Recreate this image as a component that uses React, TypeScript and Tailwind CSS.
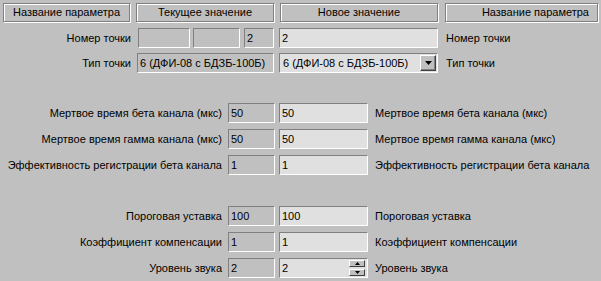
import React from "react";

const sunken =
  "border border-t-[#808080] border-l-[#808080] border-b-white border-r-white";

function Field({
  w,
  value,
  light,
  className = "",
}: {
  w: string;
  value?: string;
  light?: boolean;
  className?: string;
}) {
  return (
    <div
      className={`${w} h-[20px] ${sunken} ${
        light ? "bg-[#e0e0e0]" : "bg-[#c0c0c0]"
      } flex items-center pl-[2px] leading-none ${className}`}
    >
      {value}
    </div>
  );
}

function HeaderBtn({
  w,
  children,
  className = "",
}: {
  w: string;
  children: React.ReactNode;
  className?: string;
}) {
  return (
    <div
      className={`${w} h-[19px] border border-[#808080] shadow-[inset_1px_1px_0_#fff,1px_1px_0_#fff] flex items-center leading-none ${className}`}
    >
      {children}
    </div>
  );
}

function Row({
  labelW,
  label,
  current,
  newValue,
  right,
  spin,
}: {
  labelW: string;
  label: string;
  current: string;
  newValue: string;
  right: string;
  spin?: boolean;
}) {
  return (
    <div className="flex items-center h-[20px]">
      <div className={`${labelW} text-right whitespace-nowrap`}>{label}</div>
      <Field w="w-[47px]" value={current} className="ml-[6px]" />
      <div
        className={`w-[89px] h-[20px] ml-[4px] ${sunken} bg-[#e0e0e0] flex items-center pl-[2px] relative`}
      >
        {newValue}
        {spin && (
          <div className="absolute right-[2px] top-[1px] flex flex-col gap-[2px]">
            <div className="w-[16px] h-[7px] bg-[#c0c0c0] border border-t-white border-l-white border-b-[#404040] border-r-[#404040] flex items-center justify-center">
              <svg width="5" height="3" viewBox="0 0 5 3">
                <polygon points="2.5,0 5,3 0,3" fill="#000" />
              </svg>
            </div>
            <div className="w-[16px] h-[7px] bg-[#c0c0c0] border border-t-white border-l-white border-b-[#404040] border-r-[#404040] flex items-center justify-center">
              <svg width="5" height="3" viewBox="0 0 5 3">
                <polygon points="0,0 5,0 2.5,3" fill="#000" />
              </svg>
            </div>
          </div>
        )}
      </div>
      <div className="ml-[7px] whitespace-nowrap">{right}</div>
    </div>
  );
}

export default function App() {
  return (
    <div
      className="w-[601px] h-[281px] bg-[#c0c0c0] text-black text-[11px] overflow-hidden"
      style={{ fontFamily: '"Liberation Sans", Arial, sans-serif' }}
    >
      <div className="flex pt-[3px] pl-[3px]">
        <HeaderBtn w="w-[127px]" className="justify-center">
          Название параметра
        </HeaderBtn>
        <HeaderBtn w="w-[138px] ml-[6px]" className="justify-center">
          Текущее значение
        </HeaderBtn>
        <HeaderBtn w="w-[158px] ml-[6px]" className="justify-center">
          Новое значение
        </HeaderBtn>
        <HeaderBtn w="w-[153px] ml-[7px]" className="justify-end pr-[8px]">
          Название параметра
        </HeaderBtn>
      </div>

      <div className="flex items-center h-[20px] mt-[6px]">
        <div className="w-[131px] text-right whitespace-nowrap">Номер точки</div>
        <Field w="w-[52px]" className="ml-[7px]" />
        <Field w="w-[47px]" className="ml-[3px]" />
        <Field w="w-[30px]" value="2" className="ml-[4px]" />
        <Field w="w-[159px]" value="2" light className="ml-[5px]" />
        <div className="ml-[8px] whitespace-nowrap">Номер точки</div>
      </div>

      <div className="flex items-center h-[20px] mt-[5px]">
        <div className="w-[131px] text-right whitespace-nowrap">Тип точки</div>
        <Field
          w="w-[137px]"
          value="6 (ДФИ-08 с БДЗБ-100Б)"
          className="ml-[6px] whitespace-nowrap"
        />
        <div
          className={`w-[159px] h-[20px] ml-[5px] ${sunken} bg-[#e0e0e0] flex items-center pl-[3px] relative whitespace-nowrap`}
        >
          6 (ДФИ-08 с БДЗБ-100Б)
          <div className="absolute right-[1px] top-[1px] w-[16px] h-[16px] bg-[#c0c0c0] border border-t-white border-l-white border-b-[#404040] border-r-[#404040] shadow-[inset_-1px_-1px_0_#808080] flex items-center justify-center">
            <svg width="7" height="4" viewBox="0 0 7 4">
              <polygon points="0,0 7,0 3.5,4" fill="#000" />
            </svg>
          </div>
        </div>
        <div className="ml-[8px] whitespace-nowrap">Тип точки</div>
      </div>

      <div className="flex flex-col gap-[6px] mt-[30px]">
        <Row
          labelW="w-[222px]"
          label="Мертвое время бета канала (мкс)"
          current="50"
          newValue="50"
          right="Мертвое время бета канала (мкс)"
        />
        <Row
          labelW="w-[222px]"
          label="Мертвое время гамма канала (мкс)"
          current="50"
          newValue="50"
          right="Мертвое время гамма канала (мкс)"
        />
        <Row
          labelW="w-[222px]"
          label="Эффективность регистрации бета канала"
          current="1"
          newValue="1"
          right="Эффективность регистрации бета канала"
        />
      </div>

      <div className="flex flex-col gap-[6px] mt-[31px]">
        <Row
          labelW="w-[222px]"
          label="Пороговая уставка"
          current="100"
          newValue="100"
          right="Пороговая уставка"
        />
        <Row
          labelW="w-[222px]"
          label="Коэффициент компенсации"
          current="1"
          newValue="1"
          right="Коэффициент компенсации"
        />
        <Row
          labelW="w-[222px]"
          label="Уровень звука"
          current="2"
          newValue="2"
          right="Уровень звука"
          spin
        />
      </div>
    </div>
  );
}
